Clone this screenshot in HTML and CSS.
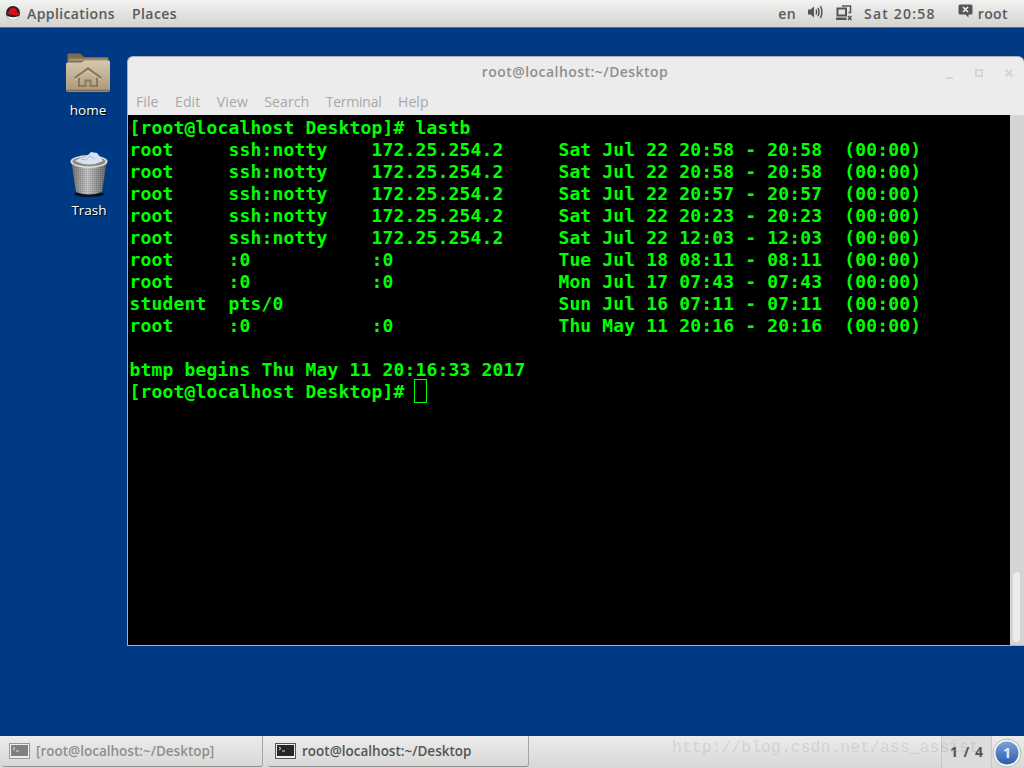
FILE: index.html
```html
<!DOCTYPE html>
<html lang="en">
<head>
<meta charset="utf-8">
<title>root@localhost:~/Desktop</title>
<link rel="stylesheet" href="styles.css">
</head>
<body>
<header class="topbar">
  <div class="top-left">
    <svg class="rh-logo" width="14" height="14" viewBox="0 0 14 14"><circle cx="7" cy="7" r="7" fill="#222"/><path d="M0.800 9.500C4 11.500 10 12 13.300 9.500 12.500 12.300 10 14 7 14S1.800 12.300 0.800 9.500Z" fill="#f2f2f2"/><path d="M3.500 2.800 8 1.500 10.500 3.500 11 6.300 13.500 8C11.500 10 8 10 5 8.800 3 8 1 7.500 1.200 6L3.200 5.600Z" fill="#d4141c"/></svg>
    <span class="menu-app">Applications</span>
    <span class="menu-places">Places</span>
  </div>
  <div class="top-right">
    <span class="lang">en</span>
    <svg class="tray-vol" width="15" height="14" viewBox="0 0 15 14"><path d="M0 4.500H2.500L6 1.500V12.500L2.500 9.500H0Z" fill="#555"/><path d="M8 4.500Q9.200 7 8 9.500M10 2.800Q12 7 10 11.200M12.500 1Q15.300 7 12.500 13" fill="none" stroke="#555" stroke-width="1.500"/></svg>
    <svg class="tray-net" width="16" height="16" viewBox="0 0 16 16"><path d="M1.500 3.500H10V10.500H1.500Z" fill="none" stroke="#555" stroke-width="2"/><path d="M0 12.500H10.500V15H0Z" fill="#555"/><path d="M6 1H14.500V7.500H12.500" fill="none" stroke="#555" stroke-width="1.500"/><path d="M12 11 15.500 15M15.500 11 12 15" stroke="#555" stroke-width="1.500"/></svg>
    <span class="clock">Sat 20:58</span>
    <svg class="tray-user" width="15" height="14" viewBox="0 0 15 14"><path d="M2 0.500H13A1.500 1.500 0 0 1 14.500 2V9A1.500 1.500 0 0 1 13 10.500H10.500V13.500L7.500 10.500H2A1.500 1.500 0 0 1 .5 9V2A1.500 1.500 0 0 1 2 .5Z" fill="#555"/><path d="M5 3 10 8M10 3 5 8" stroke="#eee" stroke-width="1.700"/></svg>
    <span class="user">root</span>
  </div>
</header>

<main class="desktop">
  <div class="desk-icon desk-home">
    <svg width="44" height="39" viewBox="0 0 44 39"><defs><linearGradient id="fold" x1="0" x2="0" y1="0" y2="1"><stop offset="0" stop-color="#d6c9ae"/><stop offset="1" stop-color="#a9987a"/></linearGradient></defs><path d="M1.500 2Q1.500 0.500 3 0.500H14L18 4H41Q42.500 4 42.500 5.500V14H1.500Z" fill="#7f6c50"/><path d="M2.500 5.500H41.500V8H2.500Z" fill="#a3906f"/><path d="M0 11Q0 9.500 1.500 9.500H15L19 7.500H42.500Q44 7.500 44 9V37Q44 39 42 39H2Q0 39 0 37Z" fill="url(#fold)"/><path d="M0.500 37.500H43.500" stroke="#7d6b4f" stroke-width="1.500"/><path d="M9 25 22 15.500 35 25" fill="none" stroke="#8b7a5d" stroke-width="2.400"/><path d="M13 24.500V33H19.500V27.500H24.500V33H31V24.500" fill="none" stroke="#8b7a5d" stroke-width="2"/><path d="M9 27 22 17.500 35 27" fill="none" stroke="#e2d8c3" stroke-width=".8"/></svg>
    <span class="desk-label">home</span>
  </div>
  <div class="desk-icon desk-trash">
    <svg width="38" height="46" viewBox="0 0 38 46"><defs><linearGradient id="can" x1="0" x2="1" y1="0" y2="0"><stop offset="0" stop-color="#6d6d6d"/><stop offset=".45" stop-color="#c4c4c4"/><stop offset="1" stop-color="#666"/></linearGradient><pattern id="mesh" width="2" height="2" patternUnits="userSpaceOnUse"><rect width="1" height="1" fill="#000" opacity=".16"/></pattern></defs><ellipse cx="19" cy="43" rx="15" ry="3" fill="#061020"/><path d="M1.500 11 6 41Q19 46 32 41L36.500 11Z" fill="url(#can)"/><path d="M1.500 11 6 41Q19 46 32 41L36.500 11Z" fill="url(#mesh)"/><ellipse cx="19" cy="10.500" rx="18.500" ry="6.500" fill="#e2e2e2"/><ellipse cx="19" cy="10.500" rx="16.500" ry="5" fill="#8a8a8a"/><path d="M5 10 11 6.500 16 6 21 1 27 2 31 7 33 10Q19 17 5 10Z" fill="#d9e2f0"/><path d="M11 8 16 9 20 5 25 8" fill="none" stroke="#a9b9d2"/></svg>
    <span class="desk-label">Trash</span>
  </div>

  <section class="window">
    <div class="titlebar">
      <span class="win-title">root@localhost:~/Desktop</span>
      <div class="win-controls">
        <span class="ctl ctl-min"></span>
        <span class="ctl ctl-max"></span>
        <svg class="ctl-close" width="8" height="8" viewBox="0 0 8 8"><path d="M.5 .5 7.500 7.500M7.500 .5 .5 7.500" stroke="#d6d6d6" stroke-width="2.200"/></svg>
      </div>
    </div>
    <nav class="menubar">
      <span class="m-file">File</span>
      <span class="m-edit">Edit</span>
      <span class="m-view">View</span>
      <span class="m-search">Search</span>
      <span class="m-terminal">Terminal</span>
      <span class="m-help">Help</span>
    </nav>
    <div class="term-wrap">
<pre class="terminal">[root@localhost Desktop]# lastb
root     ssh:notty    172.25.254.2     Sat Jul 22 20:58 - 20:58  (00:00)
root     ssh:notty    172.25.254.2     Sat Jul 22 20:58 - 20:58  (00:00)
root     ssh:notty    172.25.254.2     Sat Jul 22 20:57 - 20:57  (00:00)
root     ssh:notty    172.25.254.2     Sat Jul 22 20:23 - 20:23  (00:00)
root     ssh:notty    172.25.254.2     Sat Jul 22 12:03 - 12:03  (00:00)
root     :0           :0               Tue Jul 18 08:11 - 08:11  (00:00)
root     :0           :0               Mon Jul 17 07:43 - 07:43  (00:00)
student  pts/0                         Sun Jul 16 07:11 - 07:11  (00:00)
root     :0           :0               Thu May 11 20:16 - 20:16  (00:00)

btmp begins Thu May 11 20:16:33 2017
[root@localhost Desktop]# <span class="cursor"></span></pre>
      <div class="scrollbar"><div class="thumb"></div></div>
    </div>
  </section>
</main>

<footer class="taskbar">
  <div class="task task-inactive">
    <svg width="21" height="16" viewBox="0 0 21 16"><rect x=".5" y=".5" width="20" height="15" fill="#eee" stroke="#999"/><rect x="2" y="2" width="17" height="11" fill="#7c827e"/><path d="M4 4 6 5.500 4 7M7 8H10" stroke="#ddd" fill="none"/></svg>
    <span>[root@localhost:~/Desktop]</span>
  </div>
  <div class="task task-active">
    <svg width="21" height="16" viewBox="0 0 21 16"><rect x=".5" y=".5" width="20" height="15" fill="#eee" stroke="#555"/><rect x="2" y="2" width="17" height="11" fill="#222a27"/><path d="M4 4 6 5.500 4 7M7 8H10" stroke="#ddd" fill="none"/></svg>
    <span>root@localhost:~/Desktop</span>
  </div>
  <div class="pager">1 / 4</div>
  <svg class="workspace" width="30" height="30" viewBox="0 0 30 30"><defs><linearGradient id="ws" x1="0" x2="0" y1="0" y2="1"><stop offset="0" stop-color="#7ba3da"/><stop offset="1" stop-color="#2c5da6"/></linearGradient></defs><circle cx="15" cy="15" r="14" fill="#f3f3f3" stroke="#bbb"/><circle cx="15" cy="15" r="11.500" fill="url(#ws)"/><text x="15" y="20" text-anchor="middle" class="ws-num">1</text></svg>
  <div class="watermark">http://blog.csdn.net/ass_assist</div>
</footer>
</body>
</html>
```
FILE: styles.css
```css
* { box-sizing: border-box; }
html, body { height: 100%; }
body {
  margin: 0;
  width: 1024px;
  height: 768px;
  overflow: hidden;
  display: flex;
  flex-direction: column;
  background: #003a84;
  font-family: "Open Sans", "Noto Sans", sans-serif;
}

/* top panel */
.topbar {
  height: 28px;
  flex: none;
  display: flex;
  justify-content: space-between;
  align-items: center;
  padding: 0 16px 1px 6px;
  background: linear-gradient(#f2f2f1, #d3d3d2);
  border-bottom: 1px solid #6f6f6f;
  color: #5a5a5a;
  font-size: 14px;
  font-weight: 600;
  letter-spacing: .4px;
}
.top-left, .top-right { display: flex; align-items: center; }
.rh-logo { margin-right: 7px; }
.menu-places { margin-left: 17px; }
.tray-vol { margin-left: 12px; margin-top: -2px; }
.tray-net { margin-left: 13px; margin-top: -1px; }
.clock { margin-left: 12px; letter-spacing: 1.2px; }
.tray-user { margin-left: 22px; margin-top: -4px; }
.user { margin-left: 5px; }

/* desktop */
.desktop { flex: 1; position: relative; }
.desk-icon {
  position: absolute;
  width: 80px;
  display: flex;
  flex-direction: column;
  align-items: center;
}
.desk-home { left: 48px; top: 25px; }
.desk-trash { left: 49px; top: 123px; }
.desk-label {
  color: #fff;
  font-size: 13.500px;
  line-height: 18px;
  text-shadow: 1px 1px 1px #000;
}
.desk-home .desk-label { margin-top: 9px; }
.desk-trash .desk-label { margin-top: 4px; }

/* terminal window */
.window {
  position: absolute;
  left: 127px;
  top: 28px;
  width: 897px;
  height: 590px;
  display: flex;
  flex-direction: column;
  background: #ececec;
  border: 1px solid #aab0b8;
  border-right: 0;
  border-radius: 6px 6px 0 0;
}
.titlebar {
  height: 33px;
  flex: none;
  position: relative;
  display: flex;
  align-items: center;
  justify-content: center;
  padding-right: 2px;
}
.win-title { color: #8f8f8f; font-size: 14px; font-weight: 600; letter-spacing: .45px; margin-top: -4px; }
.win-controls {
  position: absolute;
  right: 11px;
  top: 8px;
  display: flex;
  align-items: center;
  gap: 22px;
  height: 16px;
}
.ctl-min { width: 7px; height: 2px; background: #d6d6d6; margin-top: 9px; }
.ctl-max { width: 8px; height: 8px; border: 2px solid #d6d6d6; }
.menubar {
  height: 25px;
  flex: none;
  display: flex;
  align-items: center;
  padding: 0 0 2px 8px;
  gap: 16.500px;
  color: #a8a8a8;
  font-size: 14px;
  letter-spacing: .1px;
}
.m-terminal { letter-spacing: -.25px; }
.term-wrap { flex: 1; display: flex; min-height: 0; }
.terminal {
  flex: 1;
  margin: 0;
  padding: 2px 0 0 1.500px;
  background: #000;
  color: #00ff00;
  font-family: "DejaVu Sans Mono", monospace;
  font-weight: 700;
  font-size: 18px;
  letter-spacing: .16px;
  line-height: 22px;
  overflow: hidden;
}
.cursor {
  display: inline-block;
  width: 13px;
  height: 24px;
  margin: -6px 0 -4px -1.500px;
  border: 1px solid #00ff00;
  vertical-align: -1px;
}
.scrollbar {
  width: 14px;
  flex: none;
  background: #d4d4d4;
  padding: 457px 4px 3px 3px;
}
.thumb { height: 70px; background: #ececec; border-radius: 4px; }

/* bottom panel */
.taskbar {
  height: 32px;
  flex: none;
  position: relative;
  display: flex;
  align-items: stretch;
  padding-left: 2px;
  background: linear-gradient(#ececec, #d7d7d6);
  font-size: 13.500px;
  font-weight: 600;
}
.task {
  display: flex;
  align-items: center;
  gap: 6px;
  padding: 0 0 0 7px;
  border-right: 1px solid #a5a5a5;
  border-bottom: 1px solid #8f8f8f;
  border-radius: 0 0 3px 3px;
  margin-bottom: 1px;
}
.task-inactive { width: 261px; color: #8f8f8f; }
.task-active { width: 261px; margin-left: 5px; color: #555; }
.pager {
  width: 51px;
  margin-left: auto;
  margin-right: 32px;
  padding-bottom: 2px;
  display: flex;
  align-items: center;
  justify-content: center;
  background: #dcdcdc;
  border-left: 1px solid #c8c8c8;
  border-right: 1px solid #c8c8c8;
  color: #555;
  font-weight: 700;
  font-size: 14px;
  word-spacing: 2px;
}
.workspace { position: absolute; right: 2px; top: 2px; }
.ws-num { fill: #dfe9f7; font-size: 15px; font-weight: 700; font-family: "Open Sans", sans-serif; }
.watermark {
  position: absolute;
  left: 672px;
  top: 2px;
  font-family: "Liberation Mono", monospace;
  font-size: 16.500px;
  font-weight: 400;
  color: rgba(110, 110, 110, .18);
  white-space: nowrap;
}
```
